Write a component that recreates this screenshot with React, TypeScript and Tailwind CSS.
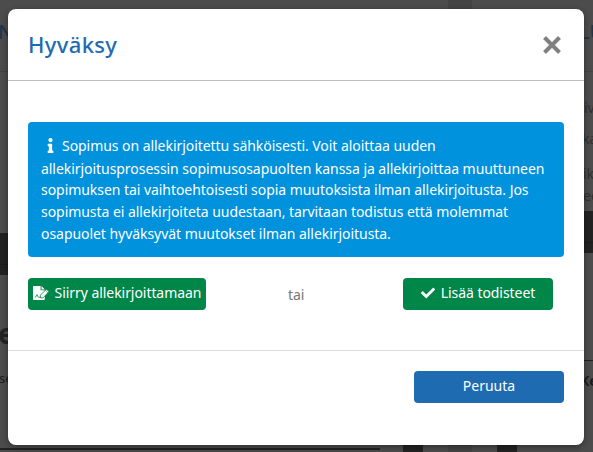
import type { ReactNode } from "react";
import { FaCheck, FaInfo } from "react-icons/fa";

function Row({ className, children }: { className: string; children?: ReactNode }) {
  return <div className={`shrink-0 overflow-hidden whitespace-nowrap ${className}`}>{children}</div>;
}

function SignIcon() {
  return (
    <svg viewBox="0 0 16 14" className="mr-[6px] h-[14px] w-[16px] shrink-0" fill="none">
      <path d="M.8 0H7.6V4.2H11.8V13.2Q11.8 14 11 14H.8Q0 14 0 13.2V.8Q0 0 .8 0Z" fill="#fff" />
      <path d="M8.5 0 11.8 3.4H8.5Z" fill="#fff" />
      <path d="M2 11.4Q3.2 11.2 4 8.6Q5 11.6 5.5 11.2Q6.2 10.4 6.8 11.4H8.6" stroke="#008649" strokeWidth=".8" />
      <path d="M7.4 11.9V9.2L13.4 3.2L16 5.6L10 11.9Z" fill="#fff" stroke="#008649" strokeWidth=".8" />
      <path d="M12.3 4.3 14.8 6.7" stroke="#008649" strokeWidth=".5" />
    </svg>
  );
}

function Backdrop() {
  return (
    <div className="flex h-full w-full bg-[#4c4c4c]" aria-hidden="true">
      <div className="flex w-[448px] flex-col">
        <Row className="h-[71px] pt-[16px] text-[20px] leading-[32px] font-medium text-[#20354a]">
          <span className="-ml-[2px]">N</span>
        </Row>
        <Row className="h-[162px] border-t border-[#424242]" />
        <Row className="h-[32px] border-b border-[#1b1b1b] bg-[#222222]" />
        <Row className="h-[10px] bg-[#222222]" />
        <Row className="h-[85px] pt-[38px] text-[28px] leading-[40px] font-bold text-[#242424]">
          <span className="-ml-[2px]">e</span>
        </Row>
        <Row className="h-[84px] pt-[8px] text-[13px] leading-[20px] text-[#1c1c1c]">
          <span className="-ml-px">se</span>
        </Row>
        <div className="flex h-[8px] items-start">
          <div className="mt-[4px] h-[2px] w-[380px] bg-[#222222]" />
          <div className="ml-[23px] h-[8px] w-[20px] bg-[#222222]" />
        </div>
      </div>
      <div className="w-[24px] bg-[#444444]" />
      <div className="flex w-[121px] flex-col">
        <Row className="h-[71px] pt-[16px] pl-[107px] text-[20px] leading-[32px] font-medium text-[#20354a]">LU</Row>
        <Row className="h-[52px] border-t border-[#424242] pt-[26px] pl-[112px] text-[14px] leading-[20px] text-[#303030]">iv</Row>
        <Row className="h-[30px] pt-[6px] pl-[110px] text-[14px] leading-[20px] text-[#303030]">ka</Row>
        <Row className="h-[58px] pt-[10px] pl-[111px] text-[14px] leading-[22px] text-[#303030]">
          ik
          <br />
          ee
        </Row>
        <Row className="h-[32px] border-b border-[#1b1b1b] bg-[#222222]" />
        <Row className="h-[10px] bg-[#222222]" />
        <Row className="h-[107px]" />
        <Row className="h-[84px] border-t border-[#222222] pt-[10px] pl-[108px] text-[14px] leading-[20px] font-bold text-[#1c1c1c]">Ke</Row>
        <div className="ml-[25px] h-[8px] w-[20px] bg-[#222222]" />
      </div>
    </div>
  );
}

export default function App() {
  return (
    <div className="relative h-[452px] w-[593px] overflow-hidden font-['Noto_Sans',sans-serif]">
      <Backdrop />
      <section
        role="dialog"
        aria-label="Hyväksy"
        className="absolute top-[9px] left-[8px] flex h-[436px] w-[576px] flex-col rounded-lg bg-white shadow-[0_2px_6px_rgba(0,0,0,0.4)]"
      >
        <header className="flex h-[72px] items-center justify-between border-b border-[#bfbfbf] px-5">
          <h1 className="pb-[2px] text-[22px] leading-[32px] font-medium tracking-[0.35px] text-[#1f6bb3]">Hyväksy</h1>
          <button type="button" aria-label="Sulje" className="mr-[3px]">
            <svg viewBox="0 0 18 18" className="size-[18px]" fill="none" stroke="#808080" strokeWidth="4">
              <path d="M1.5 1.5 16.5 16.5M16.5 1.5 1.5 16.5" />
            </svg>
          </button>
        </header>
        <div className="h-[269px] px-5 pt-[41px]">
          <p className="h-[135px] rounded bg-[#0092dd] px-[13px] pt-[13px] text-[14px] leading-[22px] tracking-[-0.05px] text-white">
            <FaInfo className="mr-[4px] ml-[2px] inline size-[15px] align-[-2px]" />
            Sopimus on allekirjoitettu sähköisesti. Voit aloittaa uuden{" "}
            <span className="relative top-px">
              allekirjoitusprosessin sopimusosapuolten kanssa ja allekirjoittaa muuttuneen
            </span>{" "}
            sopimuksen tai vaihtoehtoisesti sopia muutoksista ilman allekirjoitusta. Jos
            <br />
            sopimusta ei allekirjoiteta uudestaan, tarvitaan todistus että molemmat osapuolet
            hyväksyvät muutokset ilman allekirjoitusta.
          </p>
          <div className="mt-[21px] flex h-8 items-center text-[14px] leading-5">
            <button type="button" className="flex h-8 w-[178px] items-center justify-center rounded bg-[#008649] pb-[2px] tracking-[-0.06px] whitespace-nowrap text-white">
              <SignIcon />
              Siirry allekirjoittamaan
            </button>
            <span className="ml-[82px] w-[115px] pt-[2px] tracking-[-0.1px] text-[#777777]">tai</span>
            <button type="button" className="flex h-8 w-[150px] items-center justify-center rounded bg-[#008649] pb-[2px] tracking-[-0.06px] text-white">
              <FaCheck className="mr-[6px] size-[14px]" />
              Lisää todisteet
            </button>
          </div>
        </div>
        <footer className="flex flex-1 items-start justify-end border-t border-[#dddddd] px-5 pt-5">
          <button type="button" className="h-8 w-[150px] rounded bg-[#1e6bb2] pb-[2px] text-[14px] leading-5 text-white">
            Peruuta
          </button>
        </footer>
      </section>
    </div>
  );
}
